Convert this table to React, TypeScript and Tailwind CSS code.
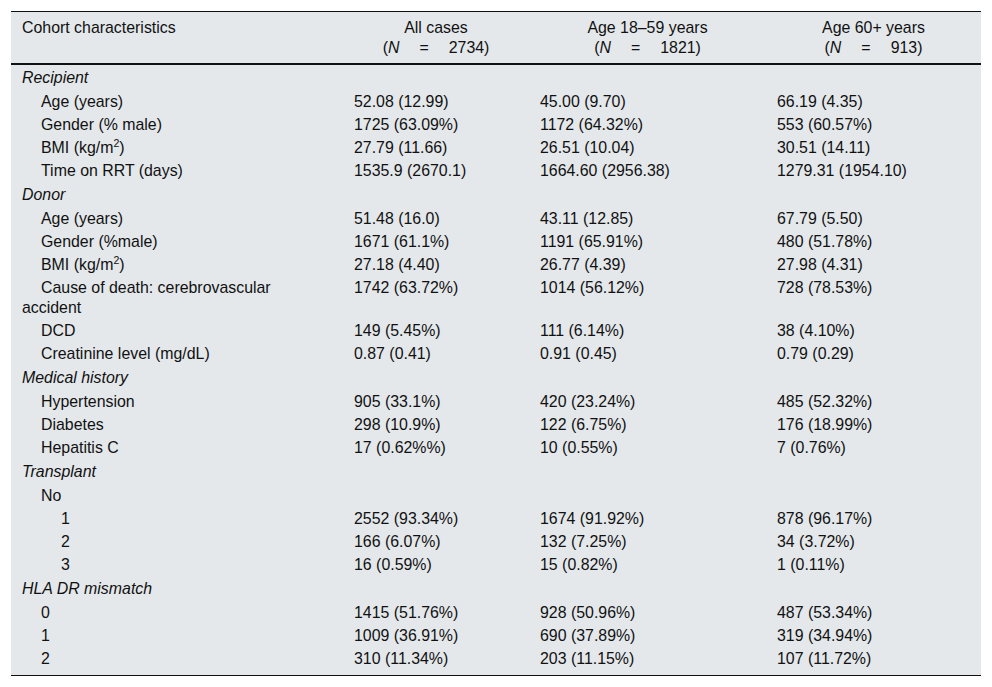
import React from 'react';

type Row =
  | { kind: 'section'; label: string }
  | { kind: 'item'; label: React.ReactNode; level: 1 | 2; values: [string, string, string]; last?: boolean };

const Sup = ({ children }: { children: React.ReactNode }) => (
  <sup className="relative top-[-6px] text-[10.5px] leading-none">{children}</sup>
);

const rows: Row[] = [
  { kind: 'section', label: 'Recipient' },
  { kind: 'item', level: 1, label: 'Age (years)', values: ['52.08 (12.99)', '45.00 (9.70)', '66.19 (4.35)'] },
  { kind: 'item', level: 1, label: 'Gender (% male)', values: ['1725 (63.09%)', '1172 (64.32%)', '553 (60.57%)'] },
  { kind: 'item', level: 1, label: <>BMI (kg/m<Sup>2</Sup>)</>, values: ['27.79 (11.66)', '26.51 (10.04)', '30.51 (14.11)'] },
  { kind: 'item', level: 1, label: 'Time on RRT (days)', values: ['1535.9 (2670.1)', '1664.60 (2956.38)', '1279.31 (1954.10)'] },
  { kind: 'section', label: 'Donor' },
  { kind: 'item', level: 1, label: 'Age (years)', values: ['51.48 (16.0)', '43.11 (12.85)', '67.79 (5.50)'] },
  { kind: 'item', level: 1, label: 'Gender (%male)', values: ['1671 (61.1%)', '1191 (65.91%)', '480 (51.78%)'] },
  { kind: 'item', level: 1, label: <>BMI (kg/m<Sup>2</Sup>)</>, values: ['27.18 (4.40)', '26.77 (4.39)', '27.98 (4.31)'] },
  {
    kind: 'item',
    level: 1,
    label: (
      <>
        Cause of death: cerebrovascular
        <br />
        accident
      </>
    ),
    values: ['1742 (63.72%)', '1014 (56.12%)', '728 (78.53%)'],
  },
  { kind: 'item', level: 1, label: 'DCD', values: ['149 (5.45%)', '111 (6.14%)', '38 (4.10%)'] },
  { kind: 'item', level: 1, label: 'Creatinine level (mg/dL)', values: ['0.87 (0.41)', '0.91 (0.45)', '0.79 (0.29)'] },
  { kind: 'section', label: 'Medical history' },
  { kind: 'item', level: 1, label: 'Hypertension', values: ['905 (33.1%)', '420 (23.24%)', '485 (52.32%)'] },
  { kind: 'item', level: 1, label: 'Diabetes', values: ['298 (10.9%)', '122 (6.75%)', '176 (18.99%)'] },
  { kind: 'item', level: 1, label: 'Hepatitis C', values: ['17 (0.62%%)', '10 (0.55%)', '7 (0.76%)'] },
  { kind: 'section', label: 'Transplant' },
  { kind: 'item', level: 1, label: 'No', values: ['', '', ''] },
  { kind: 'item', level: 2, label: '1', values: ['2552 (93.34%)', '1674 (91.92%)', '878 (96.17%)'] },
  { kind: 'item', level: 2, label: '2', values: ['166 (6.07%)', '132 (7.25%)', '34 (3.72%)'] },
  { kind: 'item', level: 2, label: '3', values: ['16 (0.59%)', '15 (0.82%)', '1 (0.11%)'] },
  { kind: 'section', label: 'HLA DR mismatch' },
  { kind: 'item', level: 1, label: '0', values: ['1415 (51.76%)', '928 (50.96%)', '487 (53.34%)'] },
  { kind: 'item', level: 1, label: '1', values: ['1009 (36.91%)', '690 (37.89%)', '319 (34.94%)'] },
  { kind: 'item', level: 1, label: '2', values: ['310 (11.34%)', '203 (11.15%)', '107 (11.72%)'], last: true },
];

const NCount = ({ n }: { n: string }) => (
  <>
    (<i>N</i>
    <span className="mx-[20px]">=</span>
    {n})
  </>
);

export default function App() {
  return (
    <div className="min-h-screen bg-white pt-[11px] px-[11px] font-['Liberation_Sans',Arial,sans-serif] text-[15.9px] leading-[20px] text-[#111]">
      <table className="w-[970px] table-fixed border-collapse bg-[#e4e8eb]">
        <colgroup>
          <col className="w-[332px]" />
          <col className="w-[186px]" />
          <col className="w-[237px]" />
          <col className="w-[215px]" />
        </colgroup>
        <thead>
          <tr className="border-t border-[#111] border-b-2 border-b-[#111]">
            <th className="px-[11px] pt-[6px] pb-[5px] text-left font-normal align-top">Cohort characteristics</th>
            <th className="px-[11px] pt-[6px] pb-[5px] text-center font-normal align-top">
              All cases
              <br />
              <NCount n="2734" />
            </th>
            <th className="px-[11px] pt-[6px] pb-[5px] text-center font-normal align-top">
              Age 18–59 years
              <br />
              <NCount n="1821" />
            </th>
            <th className="px-[11px] pt-[6px] pb-[5px] text-center font-normal align-top">
              Age 60+ years
              <br />
              <NCount n="913" />
            </th>
          </tr>
        </thead>
        <tbody className="border-b border-[#111]">
          {rows.map((r, i) =>
            r.kind === 'section' ? (
              <tr key={i}>
                <td colSpan={4} className="px-[11px] py-[2.5px] italic">
                  {r.label}
                </td>
              </tr>
            ) : (
              <tr key={i}>
                <td
                  className={`px-[11px] pt-[1.5px] align-top ${r.last ? 'pb-[6.5px]' : 'pb-[1.5px]'} ${
                    r.level === 2 ? 'indent-[39px]' : 'indent-[19px]'
                  }`}
                >
                  {r.label}
                </td>
                {r.values.map((v, j) => (
                  <td key={j} className={`px-[11px] pt-[1.5px] align-top ${r.last ? 'pb-[6.5px]' : 'pb-[1.5px]'}`}>
                    {v}
                  </td>
                ))}
              </tr>
            )
          )}
        </tbody>
      </table>
    </div>
  );
}
